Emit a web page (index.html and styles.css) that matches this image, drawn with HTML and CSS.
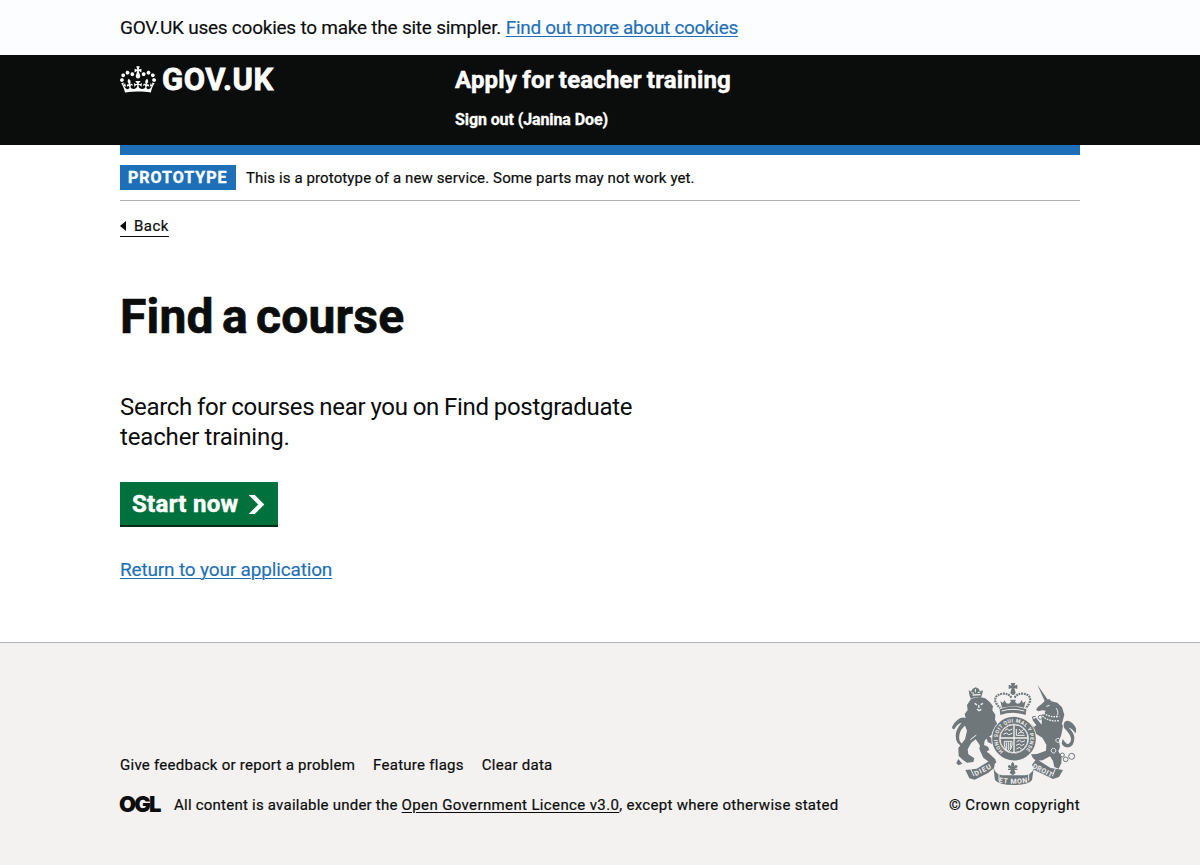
FILE: index.html
```html
<!DOCTYPE html>
<html lang="en">
<head>
<meta charset="utf-8">
<title>Find a course - Apply for teacher training</title>
<link rel="stylesheet" href="styles.css">
</head>
<body>
<div class="cookie-bar"><p class="container"><span class="cookie-text">GOV.UK uses cookies to make the site simpler.</span> <a class="link cookie-link" href="#">Find out more about cookies</a></p></div>
<header class="header">
  <div class="container header-inner">
    <a class="logo" href="#">
      <svg class="crown" viewBox="0 0 132 97" width="36" height="27" fill="currentColor" aria-hidden="true"><path fill-rule="evenodd" d="M25 30.2c3.5 1.5 7.7-.2 9.1-3.7 1.5-3.6-.2-7.8-3.9-9.2-3.6-1.4-7.6.3-9.1 3.9-1.4 3.5.3 7.5 3.9 9zM9 39.5c3.6 1.5 7.8-.2 9.2-3.7 1.5-3.6-.2-7.8-3.9-9.1-3.6-1.5-7.6.2-9.1 3.8-1.4 3.5.3 7.5 3.8 9zM4.4 57.2c3.5 1.5 7.7-.2 9.1-3.8 1.5-3.6-.2-7.7-3.9-9.1-3.5-1.5-7.6.3-9.1 3.8-1.4 3.5.3 7.6 3.9 9.1zm38.3-21.4c3.5 1.5 7.7-.2 9.1-3.8 1.5-3.6-.2-7.7-3.9-9.1-3.6-1.5-7.6.3-9.1 3.8-1.3 3.6.4 7.7 3.9 9.1zm64.4-5.6c-3.6 1.5-7.8-.2-9.1-3.7-1.5-3.6.2-7.8 3.8-9.2 3.6-1.4 7.7.3 9.2 3.9 1.3 3.5-.4 7.5-3.9 9zm15.9 9.3c-3.6 1.5-7.7-.2-9.1-3.7-1.5-3.6.2-7.8 3.7-9.1 3.6-1.5 7.7.2 9.2 3.8 1.5 3.5-.3 7.5-3.8 9zm4.7 17.7c-3.6 1.5-7.8-.2-9.2-3.8-1.5-3.6.2-7.7 3.9-9.1 3.6-1.5 7.7.3 9.2 3.8 1.3 3.5-.4 7.6-3.9 9.1zM89.3 35.8c-3.6 1.5-7.8-.2-9.2-3.8-1.4-3.6.2-7.7 3.9-9.1 3.6-1.5 7.7.3 9.2 3.8 1.4 3.6-.3 7.7-3.9 9.1zM69.7 17.7l8.9 4.7V9.3l-8.9 2.8c-.2-.3-.5-.6-.9-.9L72.4 0H59.6l3.5 11.2c-.3.3-.6.5-.9.9l-8.8-2.8v13.1l8.8-4.7c.3.3.6.7.9.9l-5 15.4v.1c-.2.8-.4 1.6-.4 2.4 0 4.1 3.1 7.5 7 8.1h.2c.3 0 .7.1 1 .1.4 0 .7 0 1-.1h.2c4-.6 7.1-4.1 7.1-8.1 0-.8-.1-1.7-.4-2.4V34l-5.1-15.4c.4-.2.7-.6 1-.9zM66 92.8c16.9 0 32.8 1.1 47.1 3.2 4-16.9 8.9-26.7 14-33.5l-9.6-3.4c1 4.9 1.1 7.2 0 10.2-1.5-1.4-3-4.3-4.2-8.7L108.6 76c2.8-2 5-3.2 7.5-3.3-4.4 9.4-10 11.9-13.6 11.2-4.3-.8-6.3-4.6-5.6-7.9 1-4.7 5.7-5.9 8-.5 4.3-8.7-3-11.4-7.6-8.8 7.1-7.2 7.9-13.5 2.1-21.1-8 6.1-8.1 12.3-4.5 20.8-4.7-5.4-12.1-2.5-9.5 6.2 3.4-5.2 7.9-2 7.2 3.1-.6 4.3-6.4 7.8-13.5 7.2-10.3-.9-10.9-8-11.2-13.8 2.5-.5 7.1 1.8 11 7.3L80.2 60c-4.1 4.4-8 5.3-12.3 5.4 1.4-4.4 8-11.6 8-11.6H55.5s6.4 7.2 7.9 11.6c-4.2-.1-8-1-12.3-5.4l1.4 16.4c3.9-5.5 8.5-7.7 10.9-7.3-.3 5.8-.9 12.8-11.1 13.8-7.2.6-12.9-2.9-13.5-7.2-.7-5 3.8-8.3 7.1-3.1 2.7-8.7-4.6-11.6-9.4-6.2 3.7-8.5 3.6-14.7-4.6-20.8-5.8 7.6-5 13.9 2.2 21.1-4.7-2.6-11.9.1-7.7 8.8 2.3-5.5 7.1-4.2 8.1.5.7 3.3-1.3 7.1-5.7 7.9-3.5.7-9-1.8-13.5-11.2 2.5.1 4.7 1.3 7.5 3.3l-4.7-15.4c-1.2 4.4-2.7 7.2-4.3 8.7-1.1-3-.9-5.3 0-10.2l-9.5 3.4c5 6.9 9.9 16.7 14 33.5 14.8-2.1 30.8-3.2 47.7-3.2z"/></svg>
      <span class="logo-text">GOV.UK</span>
    </a>
    <div class="header-content">
      <a class="service" href="#">Apply for teacher training</a>
      <a class="signout" href="#">Sign out (Janina Doe)</a>
    </div>
  </div>
</header>
<div class="container">
  <div class="blue-bar"></div>
  <div class="phase"><strong class="tag">PROTOTYPE</strong><span class="phase-text">This is a prototype of a new service. Some parts may not work yet.</span></div>
  <a class="back" href="#"><svg width="6" height="10" viewBox="0 0 6 10" aria-hidden="true"><path d="M0 5 6 0v10z" fill="currentColor"/></svg><span class="back-text">Back</span></a>
  <main>
    <h1>Find a course</h1>
    <p class="lead">Search for courses near you on Find postgraduate<br><span class="lead-end">teacher training.</span></p>
    <a class="button" href="#"><span class="button-text">Start now</span><svg width="17" height="19" viewBox="0 0 33 40" aria-hidden="true"><path fill="currentColor" d="M0 0h13l20 20-20 20H0l20-20z"/></svg></a>
    <p class="return"><a class="link" href="#">Return to your application</a></p>
  </main>
</div>
<footer class="footer">
  <div class="container footer-inner">
    <div>
      <ul class="footer-links"><li><a href="#">Give feedback or report a problem</a></li><li><a href="#">Feature flags</a></li><li><a href="#">Clear data</a></li></ul>
      <div class="licence"><span class="ogl">OGL</span><span><span class="licence-lead">All content is available under the </span><a class="licence-link" href="#">Open Government Licence v3.0</a>, except where otherwise stated</span></div>
    </div>
    <a class="copyright" href="#">
      <svg class="crest" viewBox="33 24 375 306" width="125" height="102" aria-hidden="true">
        <defs>
          <path id="garter" d="M191 229A49 49 0 1 1 253 229"/>
          <path id="scroll" d="M168 320Q220 333 272 320"/>
        </defs>
        <g class="ink">
          <path d="M86 45l7 5 5-9 9-4 9 4 4 8 9-3-3 13-3 9q-17-4-31 3l-4-12z"/>
          <path d="M93 72q20-10 43-2l14 12 9 12-2 12 9 13-1 15 9 16-12 13-9 17-18 10-3 20 12 5 4 9-10 8-18-8-1-14-12-17-13 10-11 20 2 15 18 12-3 11-19 2-12-8-13-12-1-24 20-26 6-26-7-18 4-16-4-16 9-12-2-15z"/>
          <path d="M90 178l47-22 24 3-6 20-24 20zM142 145l25 1 9 8-4 10-23 2zM139 184l17 4 12 13-7 8-18-8zM55 252l-6 12 6 7 12-5zM116 218l30 16 20 19 3 11-15 2-24-18z"/>
          <path d="M36 156q2 10 8 5 8-15 21-18-17 19-18 38 0 32 26 34 9 0 15-11l3-14-7 9q-6 10-13 8-17-3-13-28 3-16 20-30 11-15-1-20-12-4-24 5-13 10-17 22z"/>
          <path d="M292 29l32 46-9 5zM317 75l11-3 6 7 18 4 14 14 7 22-8 30-44-4-15-19 11-19-10-1-12 3-7-5 6-9 12-9z"/>
          <path d="M306 116l18 20 40 8 5 9-5 26-7 20 3 16-5 14 10 16-1 20-8 16-13-5-4-18-9-14-22 12-19 1-10-7-6-12 18-1 27-10 1-18-12-21-18-11-20 5-9-12 11-7-14-14 10-7 15 14 7-5-12-17 11-6 17 21z"/>
          <path d="M411 171q-2 6-7 1-9-13-18-14 17 15 17 32-1 29-23 27-11-1-15-12l3-13 7 9q6 9 11 5 13-9 3-27-9-13-16-19-6-17 5-22 10-3 21 8 10 11 12 25z"/>
          <path d="M212 24h14l-3 8 9-3v13l-9-3 4 15q-7 12-16 0l4-15-9 3V29l9 3zM179 103q40-17 80 0l-2 17q-38-13-76 0z"/>
          <path d="M186 98l-5-20 8 6 4-9 6 10 8 1 6-6-3-6h18l-3 6 6 6 8-1 6-10 4 9 8-6-5 20q-33-9-66 0z"/>
          <path d="M76 285l34-4 46-28 9 10-3 16-18 15-40 20-16-4zM160 276q6 21 26 25h70q20-3 26-25l-6 39q-10 15-55 15t-56-15zM289 252l43 27 37 6-12 21-18 6-56-27-7-16z"/>
        </g>
        <g class="line">
          <path stroke-width="6.5" stroke-dasharray="5.5 2.5" d="M214 68q-8-14-26-12-26 4-22 23 5 13 15 20M224 68q8-14 26-12 24 4 20 23-5 13-13 20"/>
          <circle cx="342" cy="242" r="7"/><circle cx="355" cy="258" r="6"/><circle cx="377" cy="253" r="7"/><circle cx="395" cy="244" r="9"/><circle cx="367" cy="240" r="6"/>
          <circle cx="301" cy="127" r="6"/><path d="M287 124l-10 2 4 10"/>
        </g>
        <circle cx="222" cy="191" r="68" class="paper"/>
        <circle cx="222" cy="191" r="55" fill="none" stroke="#6f777b" stroke-width="21"/>
        <text class="garter-text"><textPath href="#garter" textLength="234">HONI SOIT QUI MAL Y PENSE</textPath></text>
        <circle cx="222" cy="191" r="43" class="ink"/>
        <g class="cut">
          <circle cx="222" cy="191" r="42" stroke-width="3"/>
          <path stroke-width="4" d="M222 150v84M180 189h84"/>
          <path stroke-width="3" d="M194 167l8-6 5 6 10-5M190 178l10-4 6 5 11-4M229 162v19h25M237 162l6 8 8-7M234 176l9-5 9 4M193 199h23v11q-2 15-11 20-11-7-12-20zM199 202v20M205 202v24M211 202v20M230 200l9-4 6 5 10-4M228 211l10-4 7 5 8-5M229 222l9-5 7 5"/>
          <path stroke-width="4" d="M104 85l7 5M122 89l7-4M116 90l1 9M111 102l6 5 7-4M98 60l24-1"/>
          <path stroke-width="3" d="M106 42v10M94 53l8 2M113 53l8-2M91 194l18-14M106 222l13 2M185 108q34-10 68 0"/>
          <path stroke-width="4" stroke-dasharray="5 3" d="M307 123q20 18 50 14M311 114q18 15 47 10"/>
          <path stroke-width="3" d="M319 94l10-3M349 100q9 15 1 22M340 220a7 7 0 1 0 1 0M353 190a6 6 0 1 0 1 0M92 282l10 21M346 281l-9 23M164 286l13 11v20M279 286l-13 11v20"/>
        </g>
        <path class="ink" d="M213 281q-12-2-9-9 6-6 10 4-3-9 4-16 7 7 4 16 4-10 10-4 3 7-9 9h9v4h-9l4 9-9 7-9-7 4-9h-9v-4zM194 241l9-8 8 6 11-4 10 4 8-6 10 8-8 10-11-4-10 5-10-5-9 4z"/>
        <g class="motto">
          <text transform="translate(107 304) rotate(-27)" textLength="54">DIEU</text>
          <text transform="translate(276 278) rotate(27)" textLength="64">DROIT</text>
          <text><textPath href="#scroll" textLength="88" startOffset="8">ET MON</textPath></text>
        </g>
      </svg>
      <span class="crown-text">© Crown copyright</span>
    </a>
  </div>
</footer>
</body>
</html>
```
FILE: styles.css
```css
* { box-sizing: border-box; }
body { margin: 0; background: #fff; color: #0b0c0c; font: 19px/25px Roboto, Arial, sans-serif; }
p, ul, h1 { margin: 0; padding: 0; }
a { color: inherit; text-decoration: none; }
.container { width: 960px; margin: 0 auto; }
.link { color: #1d70b8; text-decoration: underline; text-decoration-thickness: 1px; text-underline-offset: 2px; -webkit-text-stroke: .15px #1d70b8; }
.cookie-bar { height: 55px; padding-top: 15px; background: #fcfdff; }
.cookie-text { letter-spacing: -.235px; -webkit-text-stroke: .15px #0b0c0c; }
.cookie-link { letter-spacing: -.32px; }
.header { height: 90px; background: #0b0c0c; color: #fff; }
.header-inner { display: flex; padding-top: 10px; }
.logo { display: flex; width: 335px; height: 30px; }
.crown { margin-top: 1px; }
.logo-text { margin-left: 6px; font-size: 31px; line-height: 30px; font-weight: 700; letter-spacing: .6px; -webkit-text-stroke: .8px #fff; }
.header-content { display: flex; flex-direction: column; align-items: flex-start; font-weight: 700; }
.service { font-size: 24px; line-height: 30px; letter-spacing: .18px; word-spacing: -1px; -webkit-text-stroke: .5px #fff; }
.signout { margin-top: 15px; font-size: 16px; line-height: 20px; letter-spacing: -.1px; -webkit-text-stroke: .3px #fff; }
.blue-bar { height: 10px; background: #1d70b8; }
.phase { display: flex; align-items: center; height: 46px; border-bottom: 1px solid #b1b4b6; font-size: 15px; }
.phase-text { padding-top: 1px; letter-spacing: .12px; -webkit-text-stroke: .2px #0b0c0c; }
.tag { height: 25px; width: 116px; margin-right: 10px; padding-left: 8px; background: #1d70b8; color: #fff; font-size: 16px; line-height: 25px; letter-spacing: 1px; -webkit-text-stroke: .4px #fff; }
.back { display: inline-flex; align-items: center; gap: 8px; height: 21px; margin-top: 15px; border-bottom: 1px solid #0b0c0c; font-size: 15px; line-height: 20px; letter-spacing: .5px; vertical-align: top; -webkit-text-stroke: .2px #0b0c0c; }
h1 { margin-top: 55px; font-size: 48px; line-height: 50px; font-weight: 700; letter-spacing: .2px; word-spacing: -4px; -webkit-text-stroke: .7px #0b0c0c; }
.lead { margin-top: 50px; font-size: 24px; line-height: 30px; letter-spacing: -.3px; word-spacing: -.6px; }
.lead-end { letter-spacing: -.15px; }
.button { display: flex; align-items: center; gap: 9px; width: 158px; height: 45px; margin-top: 30px; border-bottom: 2px solid #002d18; padding-left: 12px; background: #00703c; color: #fff; font-size: 24px; font-weight: 700; }
.button-text { padding-top: 1px; letter-spacing: .3px; -webkit-text-stroke: .5px #fff; }
.button svg { margin-top: 2px; }
.return { margin-top: 30px; letter-spacing: -.16px; }
.footer { height: 223px; margin-top: 60px; padding-top: 40px; border-top: 1px solid #b1b4b6; background: #f3f2f1; font-size: 15px; line-height: 20px; letter-spacing: .29px; -webkit-text-stroke: .2px #0b0c0c; }
.footer-inner { display: flex; justify-content: space-between; align-items: flex-end; }
.footer-links { display: flex; gap: 18px; margin-bottom: 20px; list-style: none; letter-spacing: .27px; }
.licence { display: flex; }
.licence-lead { letter-spacing: .23px; }
.licence-link { text-decoration: underline; text-underline-offset: 2px; letter-spacing: .37px; }
.ogl { width: 54px; margin-top: -1px; text-indent: -1px; font: 900 22px/20px Inter, sans-serif; letter-spacing: -1.8px; -webkit-text-stroke: 0; }
.copyright { display: flex; flex-direction: column; align-items: flex-end; }
.crown-text { letter-spacing: .4px; }
.crest { margin: 0 4px 10px 0; -webkit-text-stroke: 0; letter-spacing: 0; }
.ink { fill: #6f777b; }
.paper { fill: #f3f2f1; }
.line { fill: none; stroke: #6f777b; stroke-width: 3; }
.cut { fill: none; stroke: #f3f2f1; }
.garter-text { fill: #f3f2f1; font: 700 15.5px Roboto, sans-serif; }
.motto { fill: #f3f2f1; font: 700 21px Roboto, sans-serif; }
```
